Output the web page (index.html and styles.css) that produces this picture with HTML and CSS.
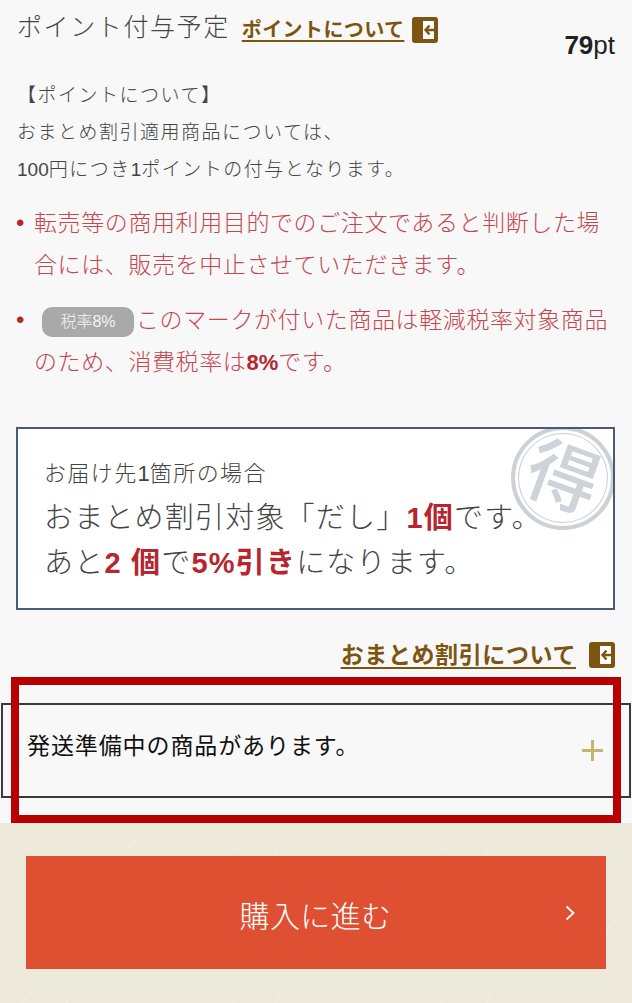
FILE: index.html
```html
<!DOCTYPE html>
<html lang="ja">
<head>
    <meta charset="UTF-8">
    <meta name="viewport" content="width=device-width, initial-scale=1.0">
    <title>ご注文内容の確認</title>
    <link rel="stylesheet" href="styles.css">
</head>
<body>
    <div class="page">
        <div class="point-head">
            <div class="point-title">
                <span class="point-label">ポイント付与予定</span>
                <a class="point-link" href="#">ポイントについて</a>
                <svg class="link-icon" viewBox="0 0 26 26">
                    <rect width="26" height="26" rx="3" fill="#7d5510"/>
                    <rect x="11" y="4" width="11" height="18" fill="#fff"/>
                    <path d="M17.5 8.5 13.5 13l4 4.5M14 13h8" fill="none" stroke="#7d5510" stroke-width="2.4"/>
                </svg>
            </div>
            <div class="point-value"><b>79</b>pt</div>
        </div>

        <p class="point-note">
            <span class="note-head">【ポイントについて】</span><br>
            おまとめ割引適用商品については、<br>
            <span class="num">100</span>円につき<span class="num">1</span>ポイントの付与となります。
        </p>

        <ul class="notice-list">
            <li><span>転売等の商用利用目的でのご注文であると判断した場合には、販売を中止させていただきます。</span></li>
            <li><span><span class="tax-mark">税率<span class="num">8%</span></span>このマークが付いた商品は軽減税率対象商品のため、消費税率は<b>8%</b>です。</span></li>
        </ul>

        <div class="discount-box">
            <div class="stamp"><span class="stamp-char">得</span></div>
            <p class="discount-sub">お届け先<span class="num">1</span>箇所の場合</p>
            <p class="discount-main">おまとめ割引対象「だし」<b>1個</b>です。</p>
            <p class="discount-main">あと<b>2 個</b>で<b>5%引き</b>になります。</p>
        </div>

        <div class="discount-link-row">
            <a class="discount-link" href="#">おまとめ割引について</a>
            <svg class="link-icon" viewBox="0 0 26 26">
                <rect width="26" height="26" rx="3" fill="#7d5510"/>
                <rect x="11" y="4" width="11" height="18" fill="#fff"/>
                <path d="M17.5 8.5 13.5 13l4 4.5M14 13h8" fill="none" stroke="#7d5510" stroke-width="2.4"/>
            </svg>
        </div>

        <div class="shipping-row">
            <span class="shipping-text">発送準備中の商品があります。</span>
            <svg class="plus-icon" viewBox="0 0 21 21">
                <path d="M10.5 0v21M0 10.5h21" stroke="#c4b46e" stroke-width="3"/>
            </svg>
        </div>

        <div class="footer-bar">
            <a class="buy-button" href="#">
                <span class="buy-label">購入に進む</span>
                <svg class="buy-arrow" viewBox="0 0 10 16">
                    <path d="M1.5 1.5 8.5 8l-7 6.5" fill="none" stroke="#fff" stroke-width="1.8"/>
                </svg>
            </a>
        </div>

        <div class="highlight-frame"></div>
    </div>
</body>
</html>
```

FILE: styles.css
```css
:root {
    --brown: #7d5510;
    --red: #c4474f;
    --strong-red: #b5262e;
    --text: #444;
}

* {
    box-sizing: border-box;
}

html, body {
    margin: 0;
    padding: 0;
}

body {
    font-family: "Liberation Sans", "Noto Sans CJK JP", sans-serif;
    font-weight: 300;
    text-spacing-trim: space-all;
    color: var(--text);
    background-color: #f8f8f8;
}

b {
    font-weight: 700;
}

/* digits stay on the regular latin face */
.num {
    font-weight: 400;
    letter-spacing: 0;
}

.page {
    position: relative;
    width: 632px;
    height: 1003px;
    overflow: hidden;
}

/* point header */
.point-head {
    display: flex;
    justify-content: space-between;
    align-items: flex-start;
    padding: 14px 17px 0 17px;
}

.point-title {
    display: flex;
    align-items: center;
    height: 32px;
}

.point-label {
    font-size: 25px;
    letter-spacing: 1.6px;
    line-height: 30px;
    margin-top: -6px;
    margin-right: 12px;
}

.point-link {
    font-size: 20px;
    font-weight: bold;
    line-height: 26px;
    letter-spacing: 0.4px;
    color: var(--brown);
    text-decoration: underline;
    text-underline-offset: 3px;
    margin-right: 8px;
}

.link-icon {
    width: 26px;
    height: 26px;
    flex: none;
}

.point-value {
    margin-top: 17px;
    font-size: 26px;
    font-weight: 400;
    line-height: 28px;
    color: #222;
}

.point-note {
    margin: 18px 0 0 0;
    padding-left: 17px;
    font-size: 19px;
    line-height: 37px;
    letter-spacing: 1.5px;
}

/* red notices */
.notice-list {
    list-style: none;
    margin: 14px 0 0 0;
    padding: 0 15px 0 16px;
    color: var(--red);
    font-size: 23px;
    line-height: 42px;
    letter-spacing: 0.6px;
}

.notice-list li {
    display: flex;
    margin-bottom: 13px;
}

.notice-list li::before {
    content: "•";
    flex: none;
    width: 18px;
    font-size: 24px;
    color: var(--strong-red);
}

.notice-list b {
    color: var(--strong-red);
    font-size: 22px;
    letter-spacing: 0;
}

.tax-mark {
    display: inline-block;
    width: 92px;
    height: 30px;
    margin: 0 2px 0 8px;
    border-radius: 10px;
    background-color: #a9a9a9;
    color: #f4f4f4;
    font-size: 16px;
    line-height: 30px;
    letter-spacing: 0;
    text-align: center;
    vertical-align: middle;
}

/* discount box */
.discount-box {
    position: relative;
    height: 183px;
    margin: 43px 17px 0 16px;
    padding: 30px 0 0 26px;
    border: 2px solid #4a5a78;
    background-color: #fff;
    overflow: hidden;
}

.stamp {
    position: absolute;
    top: -3px;
    left: 493px;
    width: 104px;
    height: 104px;
    border: 4px solid #ccd0d7;
    border-radius: 50%;
    display: flex;
    align-items: center;
    justify-content: center;
    box-shadow: inset 0 0 0 3px #fff, inset 0 0 0 4px #ccd0d7;
}

.stamp-char {
    font-size: 72px;
    font-weight: 500;
    line-height: 1;
    color: #ced2d9;
    transform: rotate(20deg);
}

.discount-sub {
    position: relative;
    margin: 0 0 7px 0;
    font-size: 22px;
    letter-spacing: 1.4px;
    line-height: 30px;
}

.discount-main {
    position: relative;
    margin: 0;
    font-size: 29px;
    line-height: 45px;
    letter-spacing: 1.2px;
    white-space: nowrap;
}

.discount-main b {
    color: var(--strong-red);
}

.discount-link-row {
    display: flex;
    justify-content: flex-end;
    align-items: center;
    gap: 13px;
    height: 26px;
    margin-top: 32px;
    padding-right: 17px;
}

.discount-link {
    font-size: 23px;
    font-weight: bold;
    line-height: 26px;
    letter-spacing: 0.6px;
    color: var(--brown);
    text-decoration: underline;
    text-underline-offset: 4px;
}

/* shipping accordion */
.shipping-row {
    display: flex;
    align-items: center;
    justify-content: space-between;
    height: 95px;
    margin: 35px 1px 0 1px;
    padding: 0 26px 0 24px;
    border: 2px solid #3a3a3a;
}

.shipping-text {
    font-family: "Liberation Serif", "Noto Sans CJK JP", serif;
    font-size: 23px;
    font-weight: 400;
    letter-spacing: 0.9px;
    line-height: 30px;
    color: #111;
    padding-bottom: 8px;
}

.plus-icon {
    width: 21px;
    height: 21px;
    flex: none;
}

/* footer */
.footer-bar {
    height: 181px;
    margin-top: 25px;
    padding: 33px 26px 34px 26px;
    background-color: #edeadc;
    background-image: url("data:image/svg+xml,%3Csvg xmlns='http://www.w3.org/2000/svg' width='210' height='150'%3E%3Cpath d='M12 40 32 18M70 22 58 48M120 70 150 36M180 30 166 52M30 120 52 92M92 130 110 104M170 128 196 96M140 12 128 26M8 84 20 72' fill='none' stroke='%23f3f1e5' stroke-width='1'/%3E%3C/svg%3E");
}

.buy-button {
    display: grid;
    grid-template-columns: 1fr auto 1fr;
    align-items: center;
    height: 113px;
    padding-right: 31px;
    background-color: #df4f32;
    color: #fff;
    text-decoration: none;
}

.buy-label {
    grid-column: 2;
    font-size: 30px;
    letter-spacing: 0.4px;
    line-height: 40px;
    padding: 8px 0 0 30px;
}

.buy-arrow {
    grid-column: 3;
    justify-self: end;
    width: 10px;
    height: 16px;
}

.highlight-frame {
    position: absolute;
    top: 677px;
    left: 11px;
    width: 610px;
    height: 146px;
    border: 8px solid #b80000;
}
```
